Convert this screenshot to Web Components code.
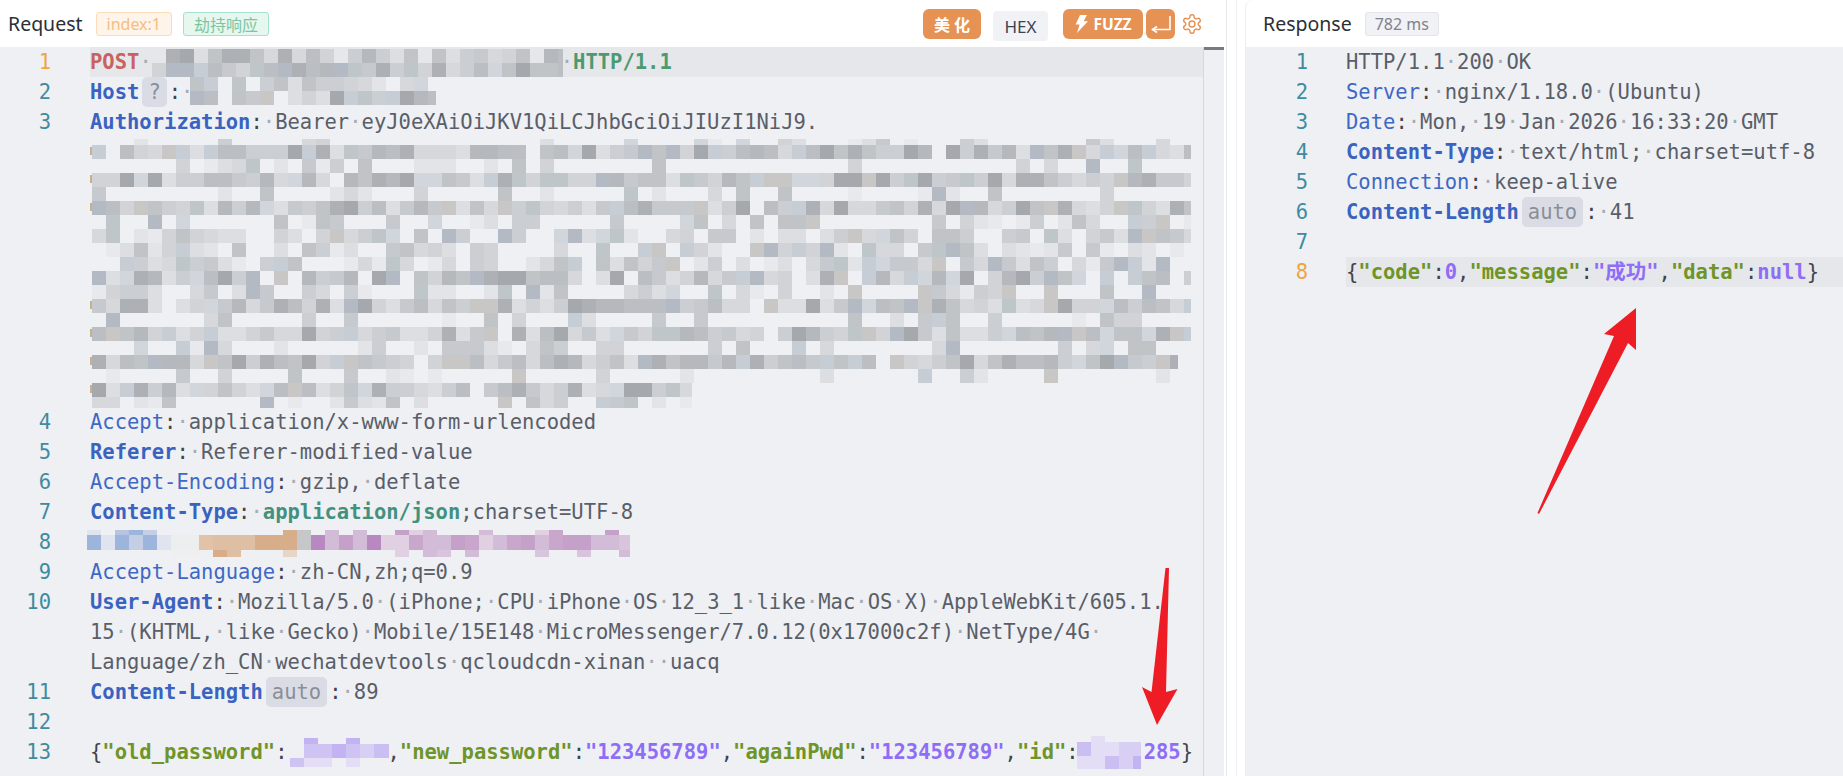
<!DOCTYPE html>
<html lang="zh-CN">
<head>
<meta charset="utf-8">
<title>Request / Response</title>
<style>
  html, body { margin: 0; background: #fff; }
  body { width: 1843px; height: 776px; overflow: hidden; position: relative; }
  .split { display: flex; align-items: stretch; height: 776px; }
</style>
</head>
<body>
<div class="split">
  <http-panel style="width:1224px" gutter="90" pad="39" scroller>
    <span slot="title">Request</span>
    <mini-tag slot="tags" tone="orange">index:1</mini-tag>
    <mini-tag slot="tags" tone="green">劫持响应</mini-tag>
    <tool-bar slot="tools"></tool-bar>

    <code-line num="1" active><span class="m">POST</span><i>·</i><pixel-mosaic width="411" advance="409" top="2" rows="14:.85,14:.95" seed="11"></pixel-mosaic><i>·</i><span class="g">HTTP/1.1</span></code-line>
    <code-line num="2"><span class="kb">Host</span><span class="p">?</span><span class="c">:</span><i>·</i><pixel-mosaic width="246" left="-3" rows="14:.65,14:.85" seed="23"></pixel-mosaic></code-line>
    <code-line num="3"><span class="kb">Authorization</span><span class="c">:</span><i>·</i>Bearer<i>·</i>eyJ0eXAiOiJKV1QiLCJhbGciOiJIUzI1NiJ9.<pixel-mosaic block width="1099" left="2" top="2" edge rows="6:.3,14:.98,14:.3,14:.98,14:.3,14:.98,14:.4,14:.75,14:.7,14:.75,14:.85,14:.55,14:.98,14:.3,14:.98,14:.3,14:.98:1086,14:.25:1086,14:.98:600,11:.5:600" seed="37"></pixel-mosaic></code-line>
    <code-line num="4"><span class="k">Accept</span><span class="c">:</span><i>·</i>application/x-www-form-urlencoded</code-line>
    <code-line num="5"><span class="kb">Referer</span><span class="c">:</span><i>·</i>Referer-modified-value</code-line>
    <code-line num="6"><span class="k">Accept-Encoding</span><span class="c">:</span><i>·</i>gzip,<i>·</i>deflate</code-line>
    <code-line num="7"><span class="kb">Content-Type</span><span class="c">:</span><i>·</i><span class="t">application/json</span>;charset=UTF-8</code-line>
    <code-line num="8"><pixel-mosaic width="543" left="-3" top="3" rows="5:.35,15:1,7:.3" palette="rainbow" seed="5"></pixel-mosaic></code-line>
    <code-line num="9"><span class="k">Accept-Language</span><span class="c">:</span><i>·</i>zh-CN,zh;q=0.9</code-line>
    <code-line num="10"><span class="kb">User-Agent</span><span class="c">:</span><i>·</i>Mozilla/5.0<i>·</i>(iPhone;<i>·</i>CPU<i>·</i>iPhone<i>·</i>OS<i>·</i>12_3_1<i>·</i>like<i>·</i>Mac<i>·</i>OS<i>·</i>X)<i>·</i>AppleWebKit/605.1.<br>15<i>·</i>(KHTML,<i>·</i>like<i>·</i>Gecko)<i>·</i>Mobile/15E148<i>·</i>MicroMessenger/7.0.12(0x17000c2f)<i>·</i>NetType/4G<i>·</i><br>Language/zh_CN<i>·</i>wechatdevtools<i>·</i>qcloudcdn-xinan<i>··</i>uacq</code-line>
    <code-line num="11"><span class="kb">Content-Length</span><span class="p">auto</span><span class="c">:</span><i>·</i>89</code-line>
    <code-line num="12"></code-line>
    <code-line num="13"><span class="c">{</span><span class="jk">"old_password"</span><span class="c">:</span><pixel-mosaic width="99" advance="100" left="3" top="1" rows="6:.3,14:.95,9:.5" palette="violet" seed="41"></pixel-mosaic><span class="c">,</span><span class="jk">"new_password"</span><span class="c">:</span><span class="js">"123456789"</span><span class="c">,</span><span class="jk">"againPwd"</span><span class="c">:</span><span class="js">"123456789"</span><span class="c">,</span><span class="jk">"id"</span><span class="c">:</span><pixel-mosaic width="64" advance="65" left="-2" top="-1" rows="6:.3,14:.95,13:.5" palette="violet" seed="8"></pixel-mosaic><span class="js">285</span><span class="c">}</span></code-line>
  </http-panel>

  <split-gutter></split-gutter>

  <http-panel style="flex:1" gutter="100" pad="38" rounded>
    <span slot="title">Response</span>
    <mini-tag slot="tags" tone="gray">782 ms</mini-tag>

    <code-line num="1">HTTP/1.1<i>·</i>200<i>·</i>OK</code-line>
    <code-line num="2"><span class="k">Server</span><span class="c">:</span><i>·</i>nginx/1.18.0<i>·</i>(Ubuntu)</code-line>
    <code-line num="3"><span class="k">Date</span><span class="c">:</span><i>·</i>Mon,<i>·</i>19<i>·</i>Jan<i>·</i>2026<i>·</i>16:33:20<i>·</i>GMT</code-line>
    <code-line num="4"><span class="kb">Content-Type</span><span class="c">:</span><i>·</i>text/html;<i>·</i>charset=utf-8</code-line>
    <code-line num="5"><span class="k">Connection</span><span class="c">:</span><i>·</i>keep-alive</code-line>
    <code-line num="6"><span class="kb">Content-Length</span><span class="p">auto</span><span class="c">:</span><i>·</i>41</code-line>
    <code-line num="7"></code-line>
    <code-line num="8" active><span class="c">{</span><span class="jk">"code"</span><span class="c">:</span><span class="js">0</span><span class="c">,</span><span class="jk">"message"</span><span class="c">:</span><span class="js">"成功"</span><span class="c">,</span><span class="jk">"data"</span><span class="c">:</span><span class="js">null</span><span class="c">}</span></code-line>
  </http-panel>
</div>
<red-arrows></red-arrows>

<script>
// small seeded random so the mosaics stay the same on every load
function rng(seed) {
  let s = seed * 2654435761 % 4294967296;
  return () => {
    s = (s + 0x6D2B79F5) | 0;
    let t = Math.imul(s ^ (s >>> 15), 1 | s);
    t = (t + Math.imul(t ^ (t >>> 7), 61 | t)) ^ t;
    return ((t ^ (t >>> 14)) >>> 0) / 4294967296;
  };
}

class MiniTag extends HTMLElement {
  constructor() {
    super();
    this.attachShadow({ mode: 'open' });
    this.shadowRoot.innerHTML = `
      <style>
        :host {
          display: inline-flex; align-items: center; justify-content: center;
          height: 24px; box-sizing: border-box; padding: 0 10px;
          border-radius: 3px; border: 1px solid; font-size: 16px;
          font-family: "Noto Sans", "Noto Sans CJK SC", sans-serif;
        }
        :host([tone="orange"]) { background: #fff4e9; border-color: #fbdcb9; color: #f6bd7f; }
        :host([tone="green"])  { background: #e6f7f0; border-color: #a6e2cb; color: #7dc59e; }
        :host([tone="gray"])   { background: #f0f2f5; border-color: #e3e5ea; color: #7f838c; padding: 0 9px; }
      </style>
      <slot></slot>`;
  }
}

class ToolBar extends HTMLElement {
  constructor() {
    super();
    this.attachShadow({ mode: 'open' });
    this.shadowRoot.innerHTML = `
      <style>
        :host { display: flex; align-items: flex-start; font-family: "Noto Sans", "Noto Sans CJK SC", sans-serif; }
        .b {
          display: flex; align-items: center; justify-content: center;
          height: 30px; margin-top: 9px; border-radius: 6px;
          background: #e59254; color: #fff; font-weight: 700; font-size: 15px;
        }
        .pretty { width: 58px; letter-spacing: 4px; text-indent: 4px; font-size: 16px; }
        .hex { width: 55px; margin: 11px 15px 0 12px; background: #f0f2f5; color: #3a4256; font-weight: 400; font-size: 17px; border-radius: 4px; }
        .fuzz { width: 80px; gap: 4px; font-family: "Open Sans", sans-serif; font-size: 15.5px; }
        .wrap { width: 29px; margin-left: 3px; }
        .gear { margin: 13px 0 0 6px; width: 22px; height: 22px; }
      </style>
      <div class="b pretty">美化</div>
      <div class="b hex">HEX</div>
      <div class="b fuzz">
        <svg width="15" height="20" viewBox="0 0 15 20"><path fill="#fff" d="M6 1h7L9.6 7.2H14L3 19l2.6-8.6H1.6z"/></svg>
        FUZZ
      </div>
      <div class="b wrap">
        <svg width="22" height="20" viewBox="0 0 22 20" fill="none" stroke="#fff" stroke-width="1.6"><path d="M20 2v13.5H2.5"/><path d="M7 12.5l-4.5 3 4.5 3"/></svg>
      </div>
      <svg class="gear" viewBox="0 0 24 24" fill="none" stroke="#e59254" stroke-width="1.6" stroke-linejoin="round">
        <path d="M12.22 2h-.44a2 2 0 0 0-2 2v.18a2 2 0 0 1-1 1.73l-.43.25a2 2 0 0 1-2 0l-.15-.08a2 2 0 0 0-2.73.73l-.22.38a2 2 0 0 0 .73 2.73l.15.1a2 2 0 0 1 1 1.72v.51a2 2 0 0 1-1 1.74l-.15.09a2 2 0 0 0-.73 2.73l.22.38a2 2 0 0 0 2.73.73l.15-.08a2 2 0 0 1 2 0l.43.25a2 2 0 0 1 1 1.73V20a2 2 0 0 0 2 2h.44a2 2 0 0 0 2-2v-.18a2 2 0 0 1 1-1.73l.43-.25a2 2 0 0 1 2 0l.15.08a2 2 0 0 0 2.73-.73l.22-.39a2 2 0 0 0-.73-2.73l-.15-.08a2 2 0 0 1-1-1.74v-.5a2 2 0 0 1 1-1.74l.15-.09a2 2 0 0 0 .73-2.73l-.22-.38a2 2 0 0 0-2.73-.73l-.15.08a2 2 0 0 1-2 0l-.43-.25a2 2 0 0 1-1-1.73V4a2 2 0 0 0-2-2z"/>
        <circle cx="12" cy="12" r="3.2"/>
      </svg>`;
  }
}

class SplitGutter extends HTMLElement {
  constructor() {
    super();
    this.attachShadow({ mode: 'open' });
    this.shadowRoot.innerHTML = `
      <style>
        :host { display: block; width: 21px; flex: none; box-sizing: border-box; padding-left: 2px; }
        div { height: 100%; width: 11px; box-sizing: border-box; border-left: 1px solid #e6e8ec; border-right: 1px solid #eceef1; }
      </style>
      <div></div>`;
  }
}

class HttpPanel extends HTMLElement {
  constructor() {
    super();
    this.attachShadow({ mode: 'open' });
    this.shadowRoot.innerHTML = `
      <style>
        :host { display: flex; flex-direction: column; flex: none; min-width: 0; --gutter: 90px; --pad: 39px; }
        header {
          display: flex; align-items: flex-start; height: 47px; flex: none;
          padding-left: 8px; box-sizing: border-box;
          font-family: "Noto Sans", "Noto Sans CJK SC", sans-serif; font-size: 19.5px; color: #2b2f36;
        }
        .title { line-height: 48px; margin-right: 13px; }
        .tags { display: flex; gap: 11px; padding-top: 12px; }
        .tools { margin-left: auto; }
        .body { flex: 1; display: flex; background: #eef0f4; min-height: 0; }
        .code { flex: 1; min-width: 0; }
        .side { display: none; width: 20px; flex: none; border-left: 1px solid #d6d8dd; position: relative; }
        .side::before { content: ""; display: block; height: 3px; background: #777a7e; }
        :host([scroller]) .side { display: block; }
        :host([rounded]) { border-left: 1px solid #eceef1; box-sizing: border-box; border-top-left-radius: 8px; }
        :host([rounded]) header { padding-left: 17px; }
      </style>
      <header>
        <div class="title"><slot name="title"></slot></div>
        <div class="tags"><slot name="tags"></slot></div>
        <div class="tools"><slot name="tools"></slot></div>
      </header>
      <div class="body">
        <div class="code"><slot></slot></div>
        <div class="side"></div>
      </div>`;
  }
  connectedCallback() {
    this.style.setProperty('--gutter', this.getAttribute('gutter') + 'px');
    this.style.setProperty('--pad', this.getAttribute('pad') + 'px');
    if (this.hasAttribute('scroller')) this.querySelector('tool-bar').style.paddingRight = '21px';
  }
}

class CodeLine extends HTMLElement {
  constructor() {
    super();
    this.attachShadow({ mode: 'open' });
    this.shadowRoot.innerHTML = `
      <style>
        :host {
          display: flex; min-height: 30px;
          font: 20.5px/30px "DejaVu Sans Mono", "Noto Sans CJK SC", monospace;
          color: #5a5e68; white-space: pre;
        }
        .num { width: var(--gutter); flex: none; box-sizing: border-box; padding-right: var(--pad); text-align: right; color: #3f8ba0; height: 30px; }
        :host([active]) .num { color: #efa540; }
        .text { flex: 1; min-width: 0; height: auto; }
        :host([active]) .text { background: #e5e7ea; }
        ::slotted(i) { font-style: normal; color: #a6abb3; }
        ::slotted(.k)  { color: #3f68c4; }
        ::slotted(.kb) { color: #3a63c0; font-weight: 700; }
        ::slotted(.c)  { color: #3f434c; }
        ::slotted(.m)  { color: #c9625f; font-weight: 700; }
        ::slotted(.g)  { color: #4b9a70; font-weight: 700; }
        ::slotted(.t)  { color: #43907f; font-weight: 700; }
        ::slotted(.jk) { color: #6f9427; font-weight: 700; }
        ::slotted(.js) { color: #8f6df6; font-weight: 700; }
        ::slotted(.p) {
          display: inline-block; height: 30px; padding: 0 6px; margin: 0 2px 0 3px;
          background: #d9dce4; color: #8b8e97; border-radius: 5px;
        }
      </style>
      <div class="num"></div>
      <div class="text"><slot></slot></div>`;
  }
  connectedCallback() {
    this.shadowRoot.querySelector('.num').textContent = this.getAttribute('num');
  }
}

const GRAY = ['#e8e9ec','#e2e4e8','#dcdee2','#d6d8dc','#d1d3d6','#cbced2','#c6c9cd','#c1c4c7','#bbbec2','#b5b8bc','#adb1b6','#a5a8ac'];
const TINT = ['#c7cdd4','#c9c7c5','#bfc6c9','#b4bac4','#d0d6dc'];

class PixelMosaic extends HTMLElement {
  constructor() {
    super();
    this.attachShadow({ mode: 'open' });
    this.shadowRoot.innerHTML = `
      <style>
        :host { display: inline-block; vertical-align: top; height: 30px; position: relative; white-space: normal; }
        :host([block]) { display: block; height: 270px; }
        svg { display: block; overflow: visible; position: absolute; left: 0; top: 0; }
      </style>`;
  }
  connectedCallback() {
    const w = +this.getAttribute('width');
    const left = +this.getAttribute('left') || 0;
    const top = +this.getAttribute('top') || 0;
    const palette = this.getAttribute('palette') || 'gray';
    const rnd = rng(+this.getAttribute('seed') || 1);
    const cell = 14;
    const rows = this.getAttribute('rows').split(',').map(r => r.split(':').map(Number));
    if (!this.hasAttribute('block')) this.style.width = (this.getAttribute('advance') || w) + 'px';
    let out = '';
    let y = top;
    rows.forEach(([h, dense, limit]) => {
      const max = limit || w;
      for (let x = 0; x < max; x += cell) {
        const full = h >= 14;
        if (rnd() > dense) continue;
        const cw = Math.min(cell, max - x);
        out += `<rect x="${x}" y="${y}" width="${cw}" height="${h}" fill="${this.shade(palette, x / w, rnd, full && dense > .8)}"/>`;
      }
      if (this.hasAttribute('edge') && h >= 14 && dense > .9) {
        out += `<rect x="-2" y="${y + 2}" width="2" height="8" fill="#c9b08c"/>`;
      }
      y += h;
    });
    const svg = `<svg xmlns="http://www.w3.org/2000/svg" width="${w}" height="30" shape-rendering="crispEdges" style="left:${left}px">${out}</svg>`;
    this.shadowRoot.innerHTML += svg;
  }
  shade(palette, at, rnd, strong) {
    if (palette === 'violet') {
      return ['#c3b3f2', '#cfc3f4', '#d8cff5', '#e3def6', '#cbbef2'][Math.floor(rnd() * 5)];
    }
    if (palette === 'rainbow') {
      const sets = at < .13 ? ['#b6c4e0', '#9db4dc', '#c4cfe6', '#dfe4ef']
        : at < .2 ? ['#eceef0', '#efefef']
        : at < .37 ? ['#d8ae8a', '#e2c3a8', '#e6d6c8', '#dfbfa4']
        : at < .4 ? ['#c6c7c8']
        : at < .6 ? ['#b888c0', '#c5a0c8', '#d3bcd8', '#e0d0e2', '#c9a6cc']
        : ['#c5a0c8', '#d3bcd8', '#e0d0e2', '#c9a6cc', '#d8c4dc', '#e0d4e4'];
      return sets[Math.floor(rnd() * sets.length)];
    }
    if (rnd() < .22) return TINT[Math.floor(rnd() * TINT.length)];
    const i = strong ? 2 + Math.floor(rnd() * 10) : Math.floor(rnd() * 8);
    return GRAY[i];
  }
}

class RedArrows extends HTMLElement {
  constructor() {
    super();
    this.attachShadow({ mode: 'open' });
    this.shadowRoot.innerHTML = `
      <style>
        :host { position: absolute; left: 0; top: 0; width: 1843px; height: 776px; pointer-events: none; }
        svg { display: block; }
      </style>
      <svg width="1843" height="776" viewBox="0 0 1843 776">
        <path fill="#ee1c25" d="M1165.5 568L1169 568L1166 692L1177.5 689L1157 725L1142 687L1151.5 692z"/>
        <path fill="#ee1c25" d="M1636 308L1636 350L1628 343L1539 514L1537.5 513L1614 336L1604 334z"/>
      </svg>`;
  }
}

customElements.define('mini-tag', MiniTag);
customElements.define('tool-bar', ToolBar);
customElements.define('split-gutter', SplitGutter);
customElements.define('http-panel', HttpPanel);
customElements.define('code-line', CodeLine);
customElements.define('pixel-mosaic', PixelMosaic);
customElements.define('red-arrows', RedArrows);
</script>
</body>
</html>
